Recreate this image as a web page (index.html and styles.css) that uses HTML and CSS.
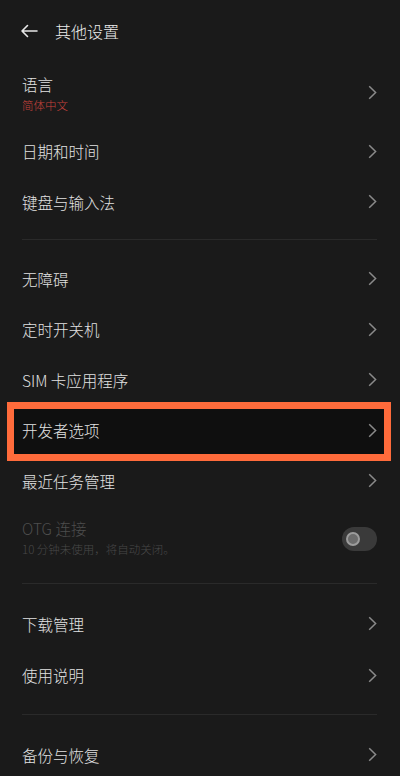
FILE: index.html
```html
<!DOCTYPE html>
<html lang="zh-CN">
<head>
<meta charset="utf-8">
<title>其他设置</title>
<link rel="stylesheet" href="styles.css">
</head>
<body>
<div class="page">
  <header class="header">
    <svg class="back" width="18" height="14" viewBox="0 0 18 14"><path d="M17 7H2M7.5 1.5L2 7l5.5 5.5" fill="none" stroke="#e8e8e8" stroke-width="1.6" stroke-linecap="round" stroke-linejoin="round"/></svg>
    <span class="title">其他设置</span>
  </header>

  <div class="row tall">
    <div class="texts"><div class="label">语言</div><div class="sub red">简体中文</div></div>
    <svg class="chev" width="9" height="15" viewBox="0 0 9 15"><path d="M1.2 1.2L7.6 7.5 1.2 13.8" fill="none" stroke="#8a8a8a" stroke-width="1.5"/></svg>
  </div>
  <div class="row">
    <div class="label">日期和时间</div>
    <svg class="chev" width="9" height="15" viewBox="0 0 9 15"><path d="M1.2 1.2L7.6 7.5 1.2 13.8" fill="none" stroke="#8a8a8a" stroke-width="1.5"/></svg>
  </div>
  <div class="row">
    <div class="label">键盘与输入法</div>
    <svg class="chev" width="9" height="15" viewBox="0 0 9 15"><path d="M1.2 1.2L7.6 7.5 1.2 13.8" fill="none" stroke="#8a8a8a" stroke-width="1.5"/></svg>
  </div>

  <div class="sep first"></div>

  <div class="row">
    <div class="label">无障碍</div>
    <svg class="chev" width="9" height="15" viewBox="0 0 9 15"><path d="M1.2 1.2L7.6 7.5 1.2 13.8" fill="none" stroke="#8a8a8a" stroke-width="1.5"/></svg>
  </div>
  <div class="row">
    <div class="label">定时开关机</div>
    <svg class="chev" width="9" height="15" viewBox="0 0 9 15"><path d="M1.2 1.2L7.6 7.5 1.2 13.8" fill="none" stroke="#8a8a8a" stroke-width="1.5"/></svg>
  </div>
  <div class="row">
    <div class="label">SIM 卡应用程序</div>
    <svg class="chev" width="9" height="15" viewBox="0 0 9 15"><path d="M1.2 1.2L7.6 7.5 1.2 13.8" fill="none" stroke="#8a8a8a" stroke-width="1.5"/></svg>
  </div>
  <div class="row highlighted">
    <div class="highlight"></div>
    <div class="label">开发者选项</div>
    <svg class="chev" width="9" height="15" viewBox="0 0 9 15"><path d="M1.2 1.2L7.6 7.5 1.2 13.8" fill="none" stroke="#8a8a8a" stroke-width="1.5"/></svg>
  </div>
  <div class="row">
    <div class="label">最近任务管理</div>
    <svg class="chev" width="9" height="15" viewBox="0 0 9 15"><path d="M1.2 1.2L7.6 7.5 1.2 13.8" fill="none" stroke="#8a8a8a" stroke-width="1.5"/></svg>
  </div>
  <div class="row tall disabled">
    <div class="texts"><div class="label">OTG 连接</div><div class="sub">10 分钟未使用，将自动关闭。</div></div>
    <div class="toggle"><div class="knob"></div></div>
  </div>

  <div class="sep"></div>

  <div class="row wide">
    <div class="label">下载管理</div>
    <svg class="chev" width="9" height="15" viewBox="0 0 9 15"><path d="M1.2 1.2L7.6 7.5 1.2 13.8" fill="none" stroke="#8a8a8a" stroke-width="1.5"/></svg>
  </div>
  <div class="row wide">
    <div class="label">使用说明</div>
    <svg class="chev" width="9" height="15" viewBox="0 0 9 15"><path d="M1.2 1.2L7.6 7.5 1.2 13.8" fill="none" stroke="#8a8a8a" stroke-width="1.5"/></svg>
  </div>

  <div class="sep"></div>

  <div class="row wide">
    <div class="label">备份与恢复</div>
    <svg class="chev" width="9" height="15" viewBox="0 0 9 15"><path d="M1.2 1.2L7.6 7.5 1.2 13.8" fill="none" stroke="#8a8a8a" stroke-width="1.5"/></svg>
  </div>
</div>
</body>
</html>
```

FILE: styles.css
```css
html, body {
  margin: 0;
  padding: 0;
  background: #1a1a1a;
}
body {
  font-family: "Noto Sans CJK SC", "Noto Sans", sans-serif;
  font-weight: 300;
  color: #e4e4e4;
}
.page {
  width: 400px;
  height: 776px;
  overflow: hidden;
  display: flex;
  flex-direction: column;
}
.header {
  height: 62px;
  flex: none;
  display: flex;
  align-items: center;
  padding-left: 20px;
  box-sizing: border-box;
}
.back {
  display: block;
  margin-right: 17px;
}
.title {
  font-size: 16px;
  line-height: 20px;
  color: #ececec;
}
.row {
  position: relative;
  flex: none;
  height: 50.5px;
  display: flex;
  align-items: center;
  justify-content: space-between;
  padding: 0 23px 0 22px;
  box-sizing: border-box;
}
.row.wide {
  height: 51.5px;
}
.row.tall {
  height: 64px;
  align-items: flex-start;
  padding-top: 12px;
}
.row.tall .chev {
  margin-top: 11px;
}
.label {
  position: relative;
  z-index: 1;
  font-size: 15.5px;
  line-height: 20px;
  color: #e2e2e2;
}
.texts {
  display: flex;
  flex-direction: column;
}
.sub {
  font-size: 11.5px;
  line-height: 16px;
  margin-top: 3px;
  color: #4a4a4a;
}
.sub.red {
  color: #c7423c;
}
.disabled .label {
  color: #4d4d4d;
}
.disabled .sub {
  color: #484848;
}
.chev {
  display: block;
  position: relative;
  z-index: 1;
  flex: none;
}
.sep {
  flex: none;
  height: 1px;
  background: #2a2a2a;
  margin: 13px 23px 14px 22px;
}
.sep.first {
  margin: 12px 23px 13.5px 22px;
}
.highlight {
  position: absolute;
  left: 7px;
  right: 9px;
  top: -3.5px;
  bottom: -5px;
  border: 7px solid #ff6b3b;
  background: #0f0f0f;
  z-index: 0;
}
.toggle {
  width: 35px;
  height: 24px;
  border-radius: 12px;
  background: #3a3a3a;
  margin-top: 9px;
  position: relative;
  flex: none;
}
.knob {
  position: absolute;
  left: 3.5px;
  top: 5px;
  width: 10px;
  height: 10px;
  border-radius: 50%;
  border: 2px solid #9c9c9c;
  background: #6c6c6c;
}
```
